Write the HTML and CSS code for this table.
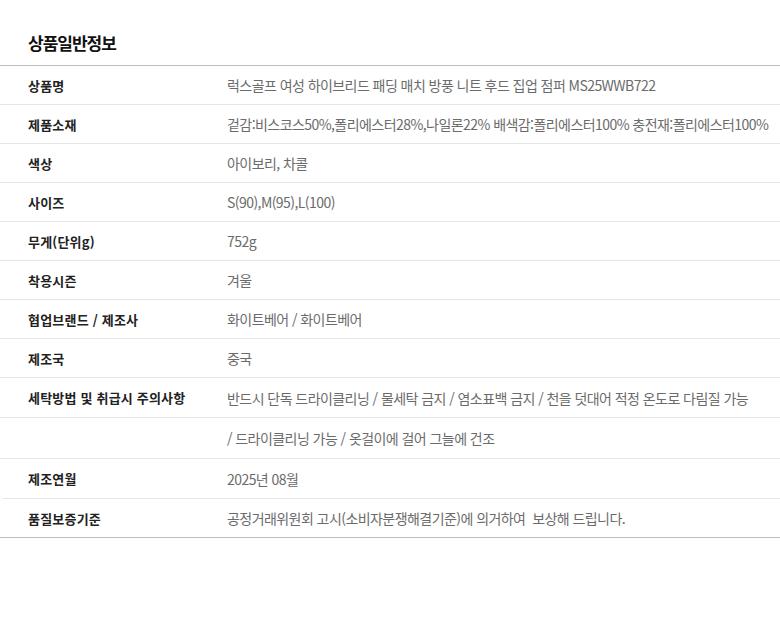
FILE: index.html
```html
<!DOCTYPE html>
<html lang="ko">
<head>
<meta charset="utf-8">
<link rel="stylesheet" href="styles.css">
</head>
<body>
<div class="page">
  <h2 class="title">상품일반정보</h2>
  <div class="table">
    <div class="row"><div class="label">상품명</div><div class="value">럭스골프 여성 하이브리드 패딩 매치 방풍 니트 후드 집업 점퍼 MS25WWB722</div></div>
    <div class="row"><div class="label">제품소재</div><div class="value">겉감:비스코스50%,폴리에스터28%,나일론22% 배색감:폴리에스터100% 충전재:폴리에스터100%</div></div>
    <div class="row"><div class="label">색상</div><div class="value">아이보리, 차콜</div></div>
    <div class="row"><div class="label">사이즈</div><div class="value">S(90),M(95),L(100)</div></div>
    <div class="row"><div class="label">무게(단위g)</div><div class="value">752g</div></div>
    <div class="row"><div class="label">착용시즌</div><div class="value">겨울</div></div>
    <div class="row"><div class="label">협업브랜드 / 제조사</div><div class="value">화이트베어 / 화이트베어</div></div>
    <div class="row"><div class="label">제조국</div><div class="value">중국</div></div>
    <div class="row r40"><div class="label">세탁방법 및 취급시 주의사항</div><div class="value">반드시 단독 드라이클리닝 / 물세탁 금지 / 염소표백 금지 / 천을 덧대어 적정 온도로 다림질 가능</div></div>
    <div class="row r41"><div class="label"></div><div class="value">/ 드라이클리닝 가능 / 옷걸이에 걸어 그늘에 건조</div></div>
    <div class="row r40 inset"><div class="label">제조연월</div><div class="value">2025년 08월</div></div>
    <div class="row last"><div class="label">품질보증기준</div><div class="value">공정거래위원회 고시(소비자분쟁해결기준)에 의거하여&nbsp; 보상해 드립니다.</div></div>
  </div>
</div>
</body>
</html>
```

FILE: styles.css
```css
html, body {
  margin: 0;
  padding: 0;
  background: #fff;
}
body {
  font-family: "Noto Sans CJK KR", "Noto Sans", sans-serif;
  color: #222;
}
.page {
  padding-top: 30px;
}
.title {
  margin: 0 0 0 28px;
  height: 35px;
  font-size: 17px;
  line-height: 26px;
  font-weight: 700;
  letter-spacing: -1px;
  color: #111;
}
.table {
  border-top: 1px solid #bdbdbd;
  border-bottom: 1px solid #bdbdbd;
}
.row {
  display: flex;
  align-items: center;
  height: 38px;
  border-bottom: 1px solid #e6e6e6;
}
.row.r40 { height: 39px; }
.row.r41 { height: 40px; }
.row.inset {
  margin-left: 3px;
}
.row.last {
  border-bottom: none;
}
.label {
  flex: none;
  width: 199px;
  padding-left: 28px;
  box-sizing: content-box;
  font-size: 13px;
  font-weight: 700;
  letter-spacing: 0.2px;
  color: #222;
}
.row.inset .label {
  padding-left: 25px;
}
.value {
  font-size: 14px;
  font-weight: 400;
  letter-spacing: -0.56px;
  color: #6b6b6b;
  white-space: nowrap;
}
```
